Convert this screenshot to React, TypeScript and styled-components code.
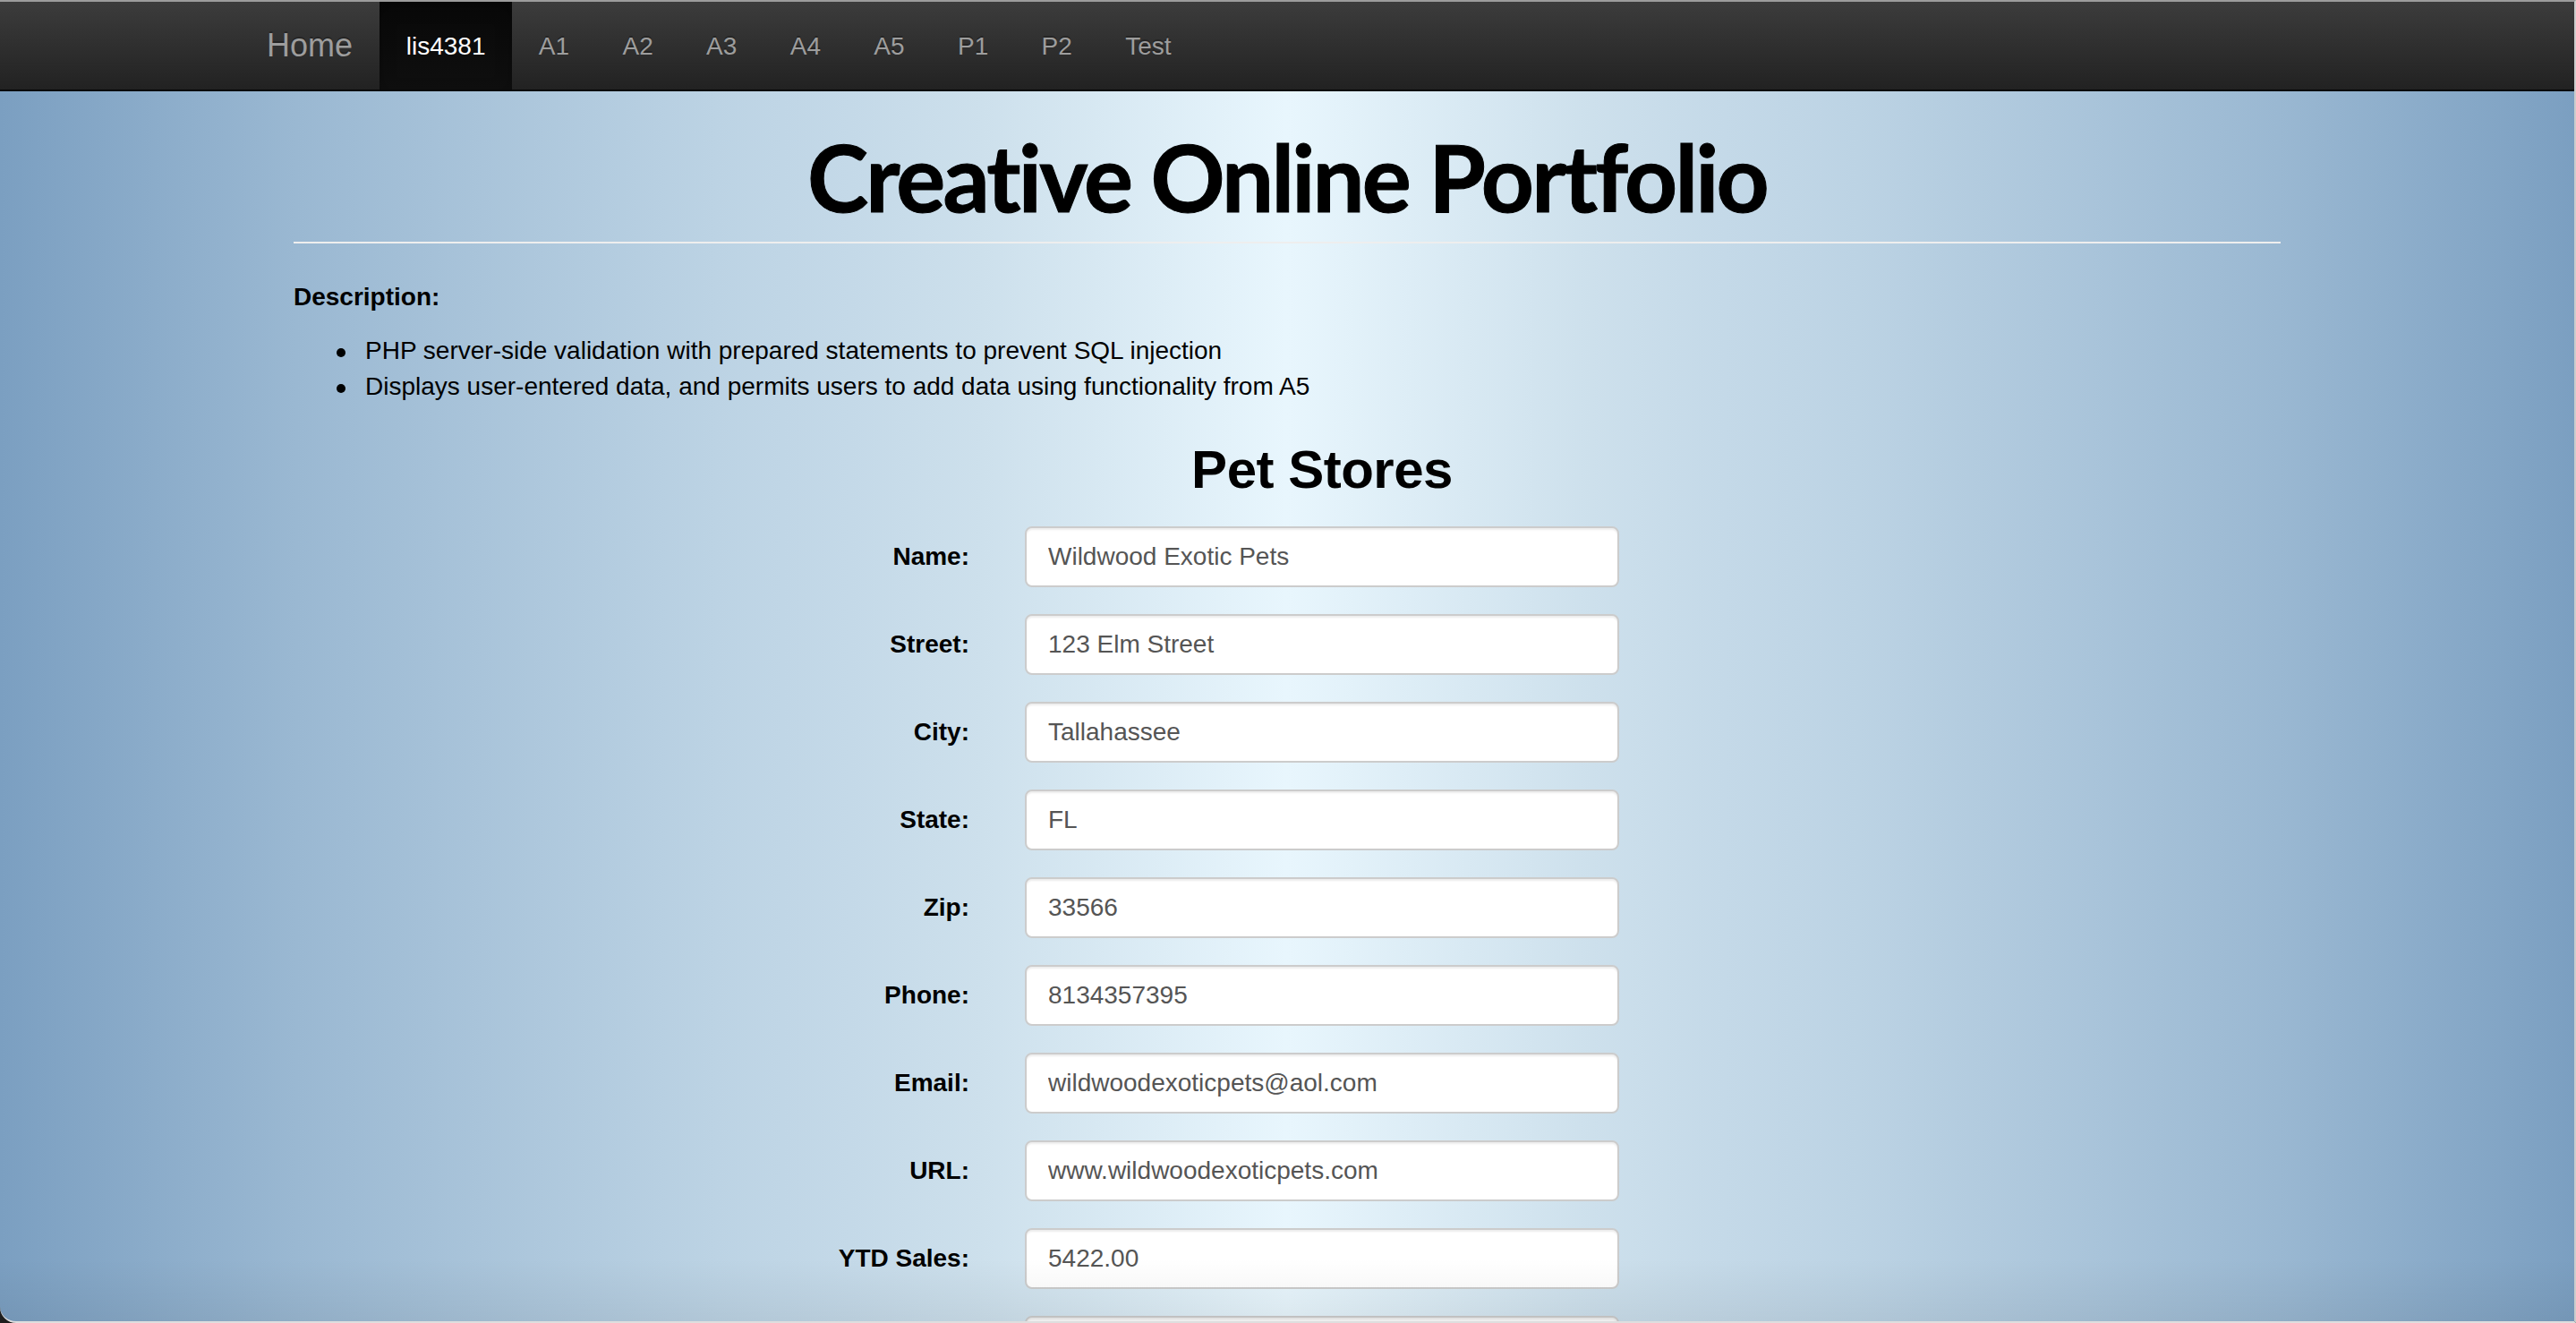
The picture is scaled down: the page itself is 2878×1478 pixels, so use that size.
import React from "react";
import styled, { createGlobalStyle, css } from "styled-components";

const GlobalStyle = createGlobalStyle`
  html, body { margin: 0; padding: 0; height: 100%; }
  body {
    background: #1e1e1e;
    font-family: "Liberation Sans", Arial, Helvetica, sans-serif;
    color: #000;
  }
  *, *::before, *::after { box-sizing: border-box; }
`;

const Frame = styled.div`
  position: relative;
  height: 100vh;
  overflow: hidden;
  border-top: 2px solid #9c9c9c;
  border-right: 2px solid #cdcdcd;
  border-bottom: 2px solid #dedede;
  border-bottom-left-radius: 18px;
  background: linear-gradient(
    to right,
    #7b9fc1 0%,
    #9ab8d2 11.5%,
    #bcd3e4 27.8%,
    #c4d9e8 33%,
    #cde0ec 38.2%,
    #e8f6fd 50%,
    #cde0ec 61.8%,
    #c4d9e8 67%,
    #bcd3e4 72.2%,
    #9ab8d2 88.5%,
    #7b9fc1 100%
  );
`;

const BottomShade = styled.div`
  position: absolute;
  left: 0;
  right: 0;
  bottom: 0;
  height: 70px;
  pointer-events: none;
  background: linear-gradient(to bottom, rgba(0, 0, 0, 0), rgba(0, 0, 0, 0.06));
`;

const Navbar = styled.nav`
  height: 100px;
  border-bottom: 2px solid #080808;
  background: linear-gradient(to bottom, #3c3c3c 0%, #222 100%);
`;

const NavInner = styled.div`
  width: 2340px;
  margin: 0 auto;
  padding: 0 30px;
  height: 100%;
  display: flex;
  align-items: stretch;
`;

const Brand = styled.a`
  margin-left: -30px;
  padding: 0 30px;
  font-size: 36px;
  line-height: 98px;
  color: #9d9d9d;
  text-decoration: none;
  text-shadow: 0 -2px 0 rgba(0, 0, 0, 0.25);
`;

const NavList = styled.ul`
  display: flex;
  margin: 0;
  padding: 0;
  list-style: none;
`;

const NavItem = styled.li<{ $active?: boolean }>`
  padding: 2px 29.7px 0;
  font-size: 28px;
  line-height: 96px;
  color: #9d9d9d;
  text-shadow: 0 -2px 0 rgba(0, 0, 0, 0.25);
  ${(p) =>
    p.$active &&
    css`
      color: #fff;
      background: linear-gradient(to bottom, #080808 0%, #0f0f0f 100%);
      box-shadow: inset 0 6px 18px rgba(0, 0, 0, 0.25);
    `}
`;

const Container = styled.main`
  width: 2340px;
  margin: 0 auto;
  padding: 0 60px;
`;

const Title = styled.h1`
  margin: 38px 0 40px;
  padding-bottom: 16px;
  border-bottom: 2px solid #eeeeee;
  text-align: center;
  font-family: Lato, "DejaVu Sans", sans-serif;
  font-weight: 700;
  font-size: 103px;
  line-height: 114px;
  letter-spacing: -2.8px;
  color: #000;
  -webkit-text-stroke: 1px #000;
`;

const DescLabel = styled.p`
  margin: 0 0 20px;
  font-size: 28px;
  line-height: 40px;
  font-weight: 700;
`;

const List = styled.ul`
  margin: 0 0 40px;
  padding-left: 80px;
  font-size: 28px;
  line-height: 40px;
  list-style: none;
`;

const ListItem = styled.li`
  &::before {
    content: "";
    display: inline-block;
    width: 10px;
    height: 10px;
    margin-left: -32px;
    margin-right: 22px;
    border-radius: 50%;
    background: #000;
    vertical-align: middle;
  }
`;

const FormGrid = styled.form`
  display: grid;
  grid-template-columns: 817px 664px;
  row-gap: 30px;
`;

const SectionTitle = styled.h2`
  grid-column: 2;
  margin: 0;
  text-align: center;
  font-size: 60px;
  line-height: 66px;
  font-weight: 700;
  letter-spacing: -0.5px;
  color: #000;
`;

const Label = styled.label`
  grid-column: 1;
  padding: 14px 62px 0 0;
  text-align: right;
  font-size: 28px;
  line-height: 40px;
  font-weight: 700;
  color: #000;
`;

const Input = styled.input`
  grid-column: 2;
  width: 100%;
  height: 68px;
  padding: 0 24px;
  font-family: "Liberation Sans", Arial, Helvetica, sans-serif;
  font-size: 28px;
  color: #555;
  background: #fff;
  border: 2px solid #cccccc;
  border-radius: 8px;
  box-shadow: inset 0 2px 2px rgba(0, 0, 0, 0.075);
  outline: none;
`;

const navItems = ["A1", "A2", "A3", "A4", "A5", "P1", "P2", "Test"];

const fields: { label: string; value: string }[] = [
  { label: "Name:", value: "Wildwood Exotic Pets" },
  { label: "Street:", value: "123 Elm Street" },
  { label: "City:", value: "Tallahassee" },
  { label: "State:", value: "FL" },
  { label: "Zip:", value: "33566" },
  { label: "Phone:", value: "8134357395" },
  { label: "Email:", value: "wildwoodexoticpets@aol.com" },
  { label: "URL:", value: "www.wildwoodexoticpets.com" },
  { label: "YTD Sales:", value: "5422.00" },
  { label: "", value: "" },
];

export default function App() {
  return (
    <>
      <GlobalStyle />
      <Frame>
        <Navbar>
          <NavInner>
            <Brand href="#">Home</Brand>
            <NavList>
              <NavItem $active>lis4381</NavItem>
              {navItems.map((n) => (
                <NavItem key={n}>{n}</NavItem>
              ))}
            </NavList>
          </NavInner>
        </Navbar>
        <Container>
          <Title>Creative Online Portfolio</Title>
          <DescLabel>Description:</DescLabel>
          <List>
            <ListItem>PHP server-side validation with prepared statements to prevent SQL injection</ListItem>
            <ListItem>Displays user-entered data, and permits users to add data using functionality from A5</ListItem>
          </List>
          <FormGrid onSubmit={(e) => e.preventDefault()}>
            <SectionTitle>Pet Stores</SectionTitle>
            {fields.map((f, i) => (
              <React.Fragment key={i}>
                <Label>{f.label}</Label>
                <Input type="text" defaultValue={f.value} />
              </React.Fragment>
            ))}
          </FormGrid>
        </Container>
        <BottomShade />
      </Frame>
    </>
  );
}
